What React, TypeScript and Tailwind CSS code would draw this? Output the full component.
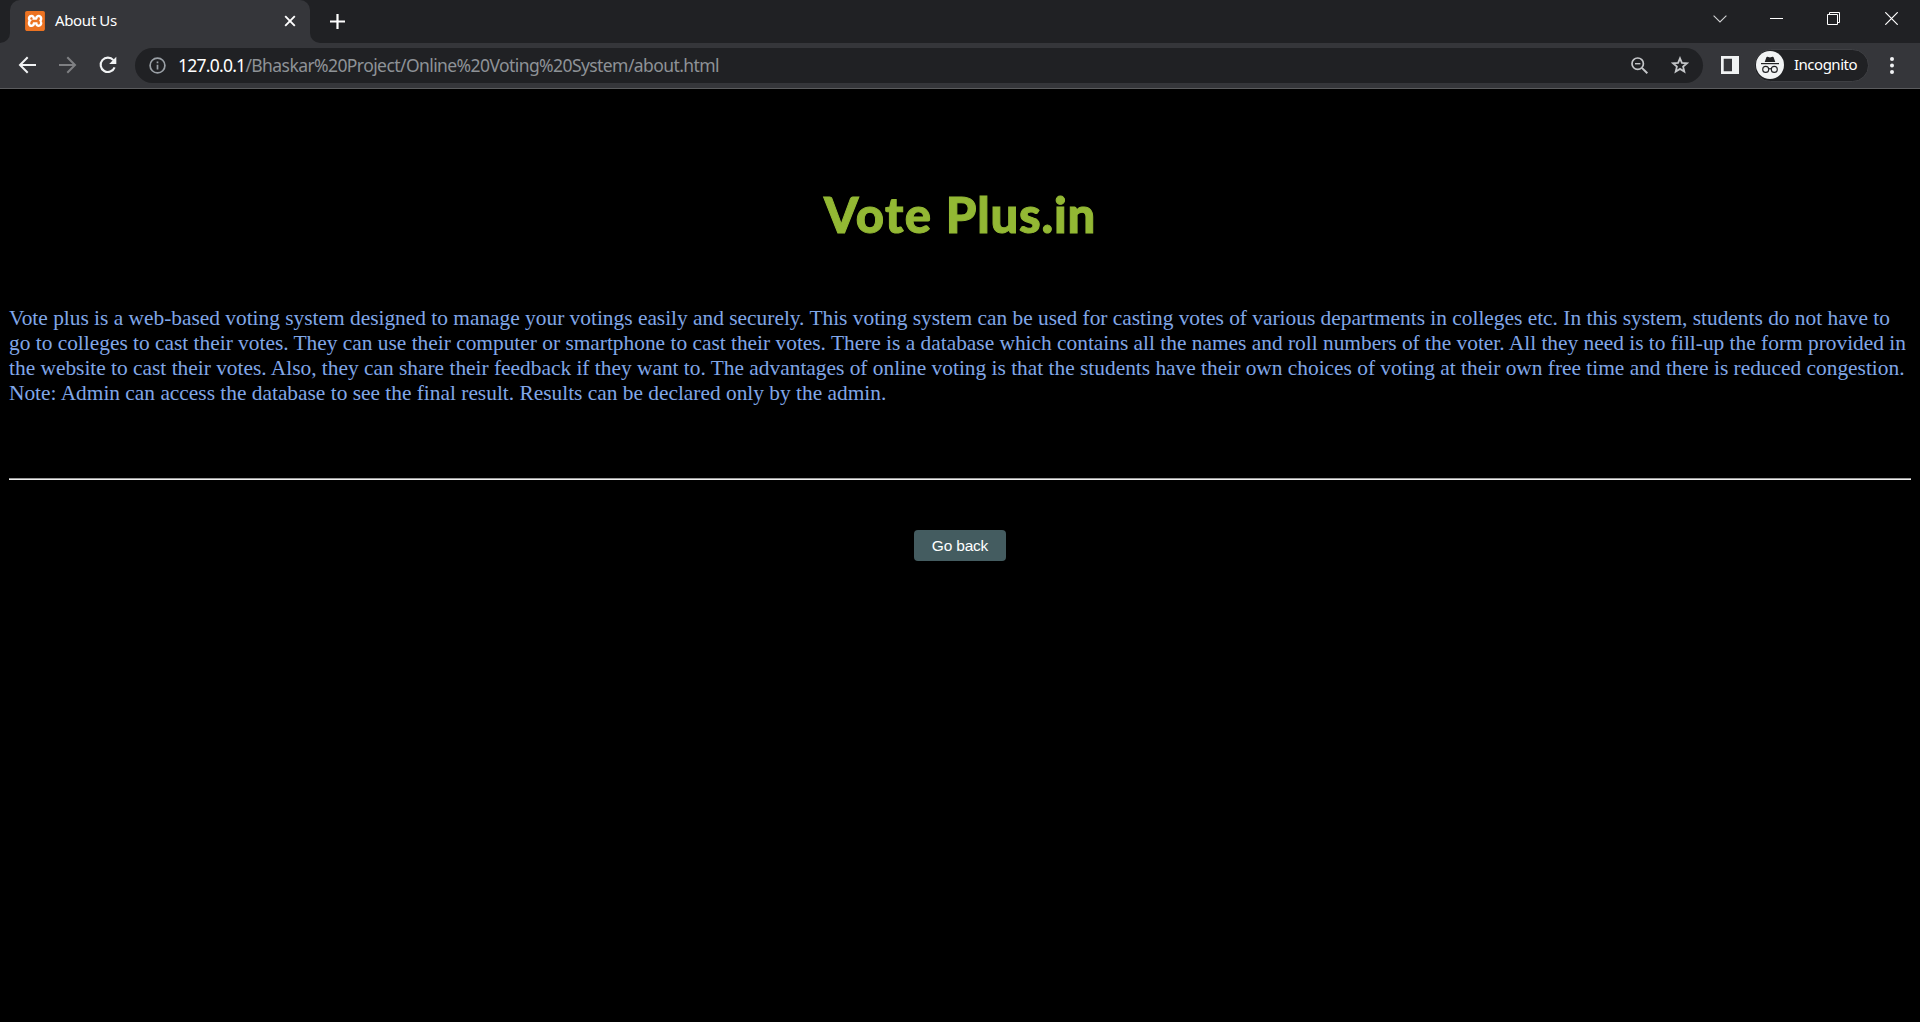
import React from "react";
import { SiXampp } from "react-icons/si";

const uiFont = "font-['Noto_Sans','Open_Sans',sans-serif]";

function XamppIcon() {
  return (
    <span className="flex size-5 shrink-0 items-center justify-center rounded-[3px] bg-[linear-gradient(#fff,#fff)] bg-[length:16px_16px] bg-center bg-no-repeat">
      <SiXampp size={20} color="#ec7322" />
    </span>
  );
}

function IncognitoIcon() {
  return (
    <svg width="28" height="28" viewBox="0 0 28 28" className="shrink-0">
      <circle cx="14" cy="14" r="14" fill="#f1f3f4" />
      <path d="M10.400 6.300q.3-.8 1.100-.5l2.500.6 2.500-.6q.8-.3 1.100.5l1.700 4.700H8.700z" fill="#202124" />
      <path d="M5 12.600h18" stroke="#202124" strokeWidth="1.200" />
      <circle cx="9.700" cy="18.400" r="3" fill="none" stroke="#202124" strokeWidth="1.100" />
      <circle cx="18.300" cy="18.400" r="3" fill="none" stroke="#202124" strokeWidth="1.100" />
      <path d="M12.700 18q1.300-.8 2.600 0" fill="none" stroke="#202124" strokeWidth="1.100" />
    </svg>
  );
}

function TabStrip() {
  return (
    <div className="flex h-[43px] bg-[#202124]">
      <div className="flex w-[10px] items-end bg-[#35363a]">
        <div className="h-full w-full rounded-br-[10px] bg-[#202124]" />
      </div>
      <div className="w-[300px] bg-[#202124]">
        <div className="flex h-full items-center rounded-t-[10px] bg-[#35363a] pb-px pl-[15px] pr-[14px]">
          <XamppIcon />
          <span className="mb-0.5 ml-[10px] grow text-[15px] leading-5 tracking-[-0.36px] text-white">About Us</span>
          <svg width="12" height="12" viewBox="0 0 12 12" className="shrink-0">
            <path d="M1.200 1.200l9.600 9.600M10.800 1.200l-9.600 9.600" stroke="#fff" strokeWidth="1.900" />
          </svg>
        </div>
      </div>
      <div className="grow bg-[#35363a]">
        <div className="flex h-full items-start rounded-bl-[10px] bg-[#202124] pl-5">
          <svg width="15" height="15" viewBox="0 0 15 15" className="mt-[14px]">
            <path d="M0 7.500h15M7.500 0v15" stroke="#fff" strokeWidth="2.200" />
          </svg>
          <div className="ml-auto flex h-[37px] items-center text-white">
            <svg width="14" height="8" viewBox="0 0 14 8" className="mr-[43px]">
              <path d="M.6.600L7 7 13.400.600" fill="none" stroke="#d0d1d3" strokeWidth="1.100" />
            </svg>
            <svg width="13" height="13" viewBox="0 0 13 13" className="mr-[44px]">
              <path d="M0 6.500h13" stroke="#fff" />
            </svg>
            <svg width="13" height="13" viewBox="0 0 13 13" className="mr-[45px]">
              <path d="M.5 2.500h10v10H.5zM2.500 2.500v-2h10v10h-2" fill="none" stroke="#fff" />
            </svg>
            <svg width="13" height="13" viewBox="0 0 13 13" className="mr-[22px]">
              <path d="M.3.300l12.400 12.400M12.700.300L.3 12.700" stroke="#fff" strokeWidth="1.200" />
            </svg>
          </div>
        </div>
      </div>
    </div>
  );
}

function Toolbar() {
  return (
    <div className="flex h-[46px] items-center border-b border-[#5b5c5e] bg-[#35363a] pb-px pl-[18px] pr-[26px]">
      <svg width="19" height="18" viewBox="0 0 19 18" fill="none" stroke="#f1f3f4" strokeWidth="2">
        <path d="M18 9H2.500M9.700 1.300L2 9l7.700 7.700" />
      </svg>
      <svg width="19" height="18" viewBox="0 0 19 18" fill="none" stroke="#7f8083" strokeWidth="2" className="ml-[21px]">
        <path d="M1 9h15.500M9.300 1.300L17 9l-7.700 7.700" />
      </svg>
      <svg width="18" height="18" viewBox="0 0 18 18" className="ml-[22px]">
        <path d="M15.600 11.300A7.200 7.200 0 1 1 14.400 4.200" fill="none" stroke="#f1f3f4" strokeWidth="2.100" />
        <path d="M17.300.800v7.100h-7.100z" fill="#f1f3f4" />
      </svg>
      <div className="ml-[18px] flex h-[35px] w-[1568px] items-center rounded-full bg-[#202124] px-[14px]">
        <svg width="17" height="17" viewBox="0 0 17 17" className="shrink-0">
          <circle cx="8.500" cy="8.500" r="7.400" fill="none" stroke="#9aa0a6" strokeWidth="1.700" />
          <path d="M8.500 7.700v4.800M8.500 4.600v1.700" stroke="#9aa0a6" strokeWidth="1.700" />
        </svg>
        <span className="ml-3 grow whitespace-nowrap text-[17.5px] leading-6 text-[#8e9297]">
          <span className="inline-block tracking-[-0.75px] text-white">127.0.0.1</span>
          <span className="tracking-[-0.58px]">/Bhaskar%20Project/Online%20Voting%20System/about.html</span>
        </span>
        <svg width="17" height="17" viewBox="0 0 17 17" className="mr-[23px] shrink-0" fill="none" stroke="#c4c6c9">
          <circle cx="6.700" cy="6.700" r="5.700" strokeWidth="1.700" />
          <path d="M10.900 10.900l5.400 5.400" strokeWidth="2" />
          <path d="M4 6.700h5.400" strokeWidth="1.400" />
        </svg>
        <svg width="18" height="18" viewBox="0 0 18 18" className="shrink-0">
          <path
            d="M9 2.300l1.900 4.600 5 .400-3.800 3.300 1.200 4.900L9 12.900l-4.300 2.600 1.200-4.900-3.800-3.300 5-.400z"
            fill="none"
            stroke="#c4c6c9"
            strokeWidth="1.800"
          />
        </svg>
      </div>
      <svg width="18" height="18" viewBox="0 0 18 18" className="ml-[18px]">
        <path fillRule="evenodd" d="M0 0h18v18H0zM2.700 2.700v12.600h8.300V2.700z" fill="#f1f3f4" />
      </svg>
      <div className="ml-[15px] flex h-[33px] w-[115px] items-center rounded-full border border-[#3f4044] bg-[#202124] pl-px">
        <IncognitoIcon />
        <span className="mb-0.5 ml-[10px] text-[15px] leading-5 tracking-[-0.5px] text-white">Incognito</span>
      </div>
      <svg width="4" height="17" viewBox="0 0 4 17" className="ml-auto" fill="#f1f3f4">
        <circle cx="2" cy="2" r="2" />
        <circle cx="2" cy="8.500" r="2" />
        <circle cx="2" cy="15" r="2" />
      </svg>
    </div>
  );
}

export default function App() {
  return (
    <div className="flex h-[1022px] w-[1920px] flex-col overflow-hidden bg-black">
      <header className={uiFont}>
        <TabStrip />
        <Toolbar />
      </header>
      <main className="flex grow flex-col px-[9px]">
        <h1 className="mt-[95px] text-center font-['Lato',sans-serif] text-[49px] font-black leading-[60px] text-[#93b834] [-webkit-text-stroke:1px_#93b834]">
          <span className="tracking-[1.5px]">Vote </span>
          <span className="tracking-[0.8px]">Plus.in</span>
        </h1>
        <p className="mt-[62px] whitespace-nowrap font-['Liberation_Serif',serif] text-[21.383px] leading-[25px] text-[#80a7e8]">
          <span className="block w-fit">Vote plus is a web-based voting system designed to manage your votings easily and securely. This voting system can be used for casting votes of various departments in colleges etc. In this system, students do not have to</span>
          <span className="block w-fit">go to colleges to cast their votes. They can use their computer or smartphone to cast their votes. There is a database which contains all the names and roll numbers of the voter. All they need is to fill-up the form provided in</span>
          <span className="block w-fit">the website to cast their votes. Also, they can share their feedback if they want to. The advantages of online voting is that the students have their own choices of voting at their own free time and there is reduced congestion.</span>
          <span className="block w-fit">Note: Admin can access the database to see the final result. Results can be declared only by the admin.</span>
        </p>
        <hr className="mt-[72px] h-[2px] border-t border-b border-t-[#9a9a9a] border-b-[#eeeeee]" />
        <button className="mt-[50px] h-[31px] w-[92px] self-center rounded-[4px] bg-[#445c60] font-['Liberation_Sans',sans-serif] text-[15.5px] leading-5 tracking-[-0.2px] text-white">
          Go back
        </button>
      </main>
    </div>
  );
}
